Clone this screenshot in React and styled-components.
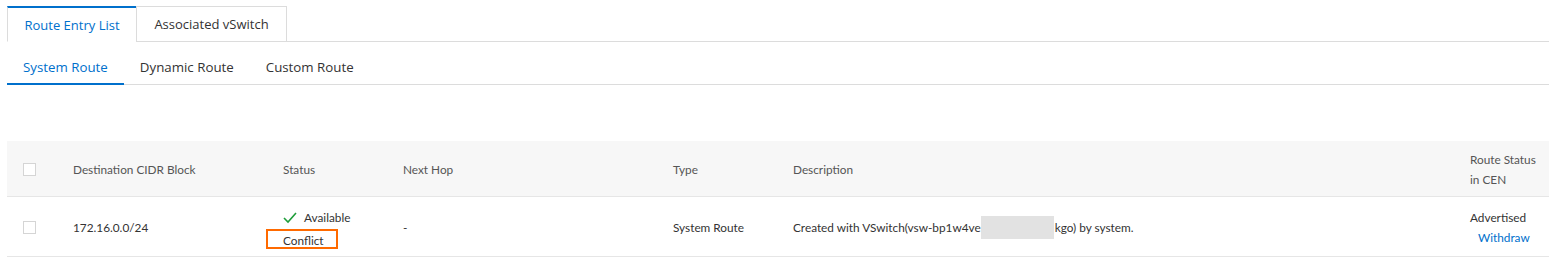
import React from "react";
import styled, { createGlobalStyle } from "styled-components";

const Global = createGlobalStyle`
  html, body { margin: 0; padding: 0; background: #fff; }
  body { font-family: "Open Sans", "Noto Sans", sans-serif; color: #333; }
`;

const Page = styled.div`
  padding: 6px 0 0 7px;
`;

const TabBar = styled.div`
  display: flex;
  height: 35px;
  border-bottom: 1px solid #dcdcdc;
`;

const Tab = styled.div`
  box-sizing: border-box;
  height: 36px;
  padding: 0 16px;
  display: flex;
  align-items: center;
  font-size: 13px;
  color: ${(p) => (p.$active ? "#0070cc" : "#333")};
  background: #fff;
  border: 1px solid #dcdcdc;
  border-top: ${(p) => (p.$active ? "2px solid #0070cc" : "1px solid #dcdcdc")};
  border-bottom: ${(p) => (p.$active ? "1px solid #fff" : "1px solid #dcdcdc")};
  border-right: ${(p) => (p.$active ? "none" : "1px solid #dcdcdc")};
  width: ${(p) => p.$w}px;
  justify-content: center;
  position: relative;
  z-index: 1;
`;

const SubBar = styled.div`
  display: flex;
  height: 42px;
  border-bottom: 1px solid #dcdcdc;
`;

const SubTab = styled.div`
  box-sizing: border-box;
  height: 43px;
  padding: 8px 16px 0;
  display: flex;
  align-items: center;
  font-size: 13.3px;
  color: ${(p) => (p.$active ? "#0070cc" : "#333")};
  border-bottom: 2px solid ${(p) => (p.$active ? "#0070cc" : "transparent")};
`;

const Table = styled.div`
  margin-top: 56px;
  display: grid;
  grid-template-columns: 50px 210px 120px 270px 120px 677px 95px;
  font-family: "Lato", "Open Sans", sans-serif;
  font-size: 11.8px;
`;

const HeadCell = styled.div`
  background: #f7f7f7;
  height: 56px;
  box-sizing: border-box;
  padding: 2px 10px 0 16px;
  display: flex;
  align-items: center;
  color: #555;
  line-height: 20px;
  border-bottom: 1px solid #e6e6e6;
`;

const Cell = styled.div`
  height: 60px;
  box-sizing: border-box;
  padding: 2px 0 0 16px;
  display: flex;
  flex-direction: column;
  justify-content: center;
  align-items: flex-start;
  color: #333;
  line-height: 20px;
  border-bottom: 1px solid #e6e6e6;
`;

const Check = styled.span`
  display: inline-block;
  width: 11px;
  height: 11px;
  border: 1px solid #d5d5d5;
  background: #fff;
`;

const StatusLine = styled.div`
  display: flex;
  align-items: center;
  gap: 7px;
  padding-top: 4px;
`;

const Conflict = styled.span`
  position: relative;
  margin-top: 3px;
  &::after {
    content: "";
    position: absolute;
    box-sizing: border-box;
    left: -17px;
    right: -14px;
    top: -2px;
    height: 20px;
    border: 2px solid #ff6a00;
  }
`;

const Blur = styled.span`
  display: inline-block;
  width: 73px;
  height: 23px;
  background: #e2e2e2;
  vertical-align: middle;
  margin: 0 1px 0 0;
`;

const Desc = styled.span`
  display: inline-flex;
  align-items: center;
  white-space: nowrap;
`;

const Link = styled.span`
  color: #0070cc;
  padding-left: 8px;
`;

export default function App() {
  return (
    <>
      <Global />
      <Page>
        <TabBar>
          <Tab $active $w={129}>Route Entry List</Tab>
          <Tab $w={151}>Associated vSwitch</Tab>
        </TabBar>
        <SubBar>
          <SubTab $active>System Route</SubTab>
          <SubTab>Dynamic Route</SubTab>
          <SubTab>Custom Route</SubTab>
        </SubBar>
        <Table>
          <HeadCell><Check /></HeadCell>
          <HeadCell>Destination CIDR Block</HeadCell>
          <HeadCell>Status</HeadCell>
          <HeadCell>Next Hop</HeadCell>
          <HeadCell>Type</HeadCell>
          <HeadCell>Description</HeadCell>
          <HeadCell>Route Status in CEN</HeadCell>

          <Cell><Check /></Cell>
          <Cell>172.16.0.0/24</Cell>
          <Cell>
            <StatusLine>
              <svg width="14" height="12" viewBox="0 0 14 12">
                <polyline points="1,6 5,10 13,1" fill="none" stroke="#1f9d3a" strokeWidth="1.6" />
              </svg>
              Available
            </StatusLine>
            <Conflict>Conflict</Conflict>
          </Cell>
          <Cell>-</Cell>
          <Cell>System Route</Cell>
          <Cell>
            <Desc>
              Created with VSwitch(vsw-bp1w4ve<Blur />kgo) by system.
            </Desc>
          </Cell>
          <Cell>
            <span>Advertised</span>
            <Link>Withdraw</Link>
          </Cell>
        </Table>
      </Page>
    </>
  );
}
